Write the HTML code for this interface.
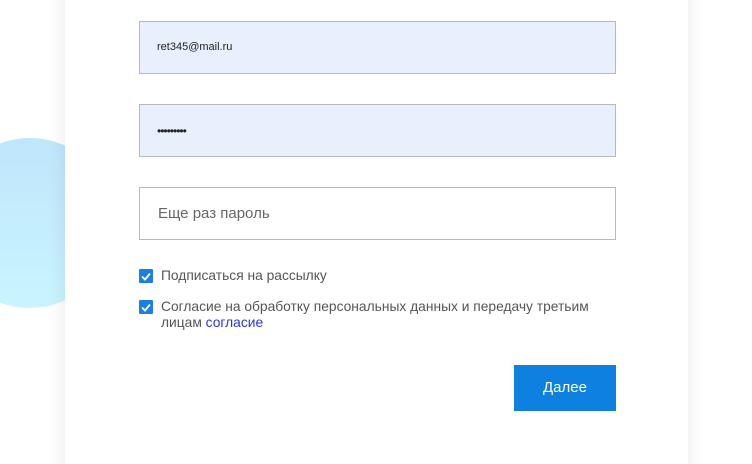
<!DOCTYPE html>
<html><head><style>
html,body{margin:0;width:752px;height:464px;overflow:hidden}
body{background:#fff;position:relative;font-family:"Liberation Sans",sans-serif}
.circle{position:absolute;left:-55px;top:138px;width:170px;height:170px;border-radius:50%;background:linear-gradient(180deg,#bfe6fb,#c9f4ff)}
.card{position:absolute;left:65px;top:-20px;width:623px;height:504px;background:#fff;box-shadow:0 0 18px rgba(0,0,0,0.09)}
.in{position:absolute;left:139px;width:475px;height:51px;border:1px solid #b9b9b9;box-sizing:content-box}
.f{background:#e8f0fe}
.cb{position:absolute;left:139px;width:14px;height:14px;background:#1a7fe0;border-radius:1px}
.lbl{position:absolute;left:161px;font-size:13.8px;color:#555;line-height:16px}
.btn{position:absolute;left:514px;top:365px;width:102px;height:46px;background:#0e80e0;color:#fff;font-size:15px;text-align:center;line-height:46px}
</style></head><body>
<div class="circle"></div>
<div class="card"></div>
<div class="in f" style="top:21px"><span style="position:absolute;left:17px;top:19px;font-size:11px;color:#222">ret345@mail.ru</span></div>
<div class="in f" style="top:104px"><span style="position:absolute;left:17px;top:19px;font-size:12px;color:#222;letter-spacing:-1px">•••••••••</span></div>
<div class="in" style="top:187px"><span style="position:absolute;left:18px;top:17px;font-size:15px;color:#666">Еще раз пароль</span></div>
<div class="cb" style="top:269px"><svg width="14" height="14"><path d="M3 7.5l3 3 5-6" stroke="#fff" stroke-width="1.8" fill="none"/></svg></div>
<div class="lbl" style="top:268px">Подписаться на рассылку</div>
<div class="cb" style="top:300px"><svg width="14" height="14"><path d="M3 7.5l3 3 5-6" stroke="#fff" stroke-width="1.8" fill="none"/></svg></div>
<div class="lbl" style="top:299px">Согласие на обработку персональных данных и передачу третьим<br>лицам <span style="color:#2a35d8">согласие</span></div>
<div class="btn">Далее</div>
</body></html>
